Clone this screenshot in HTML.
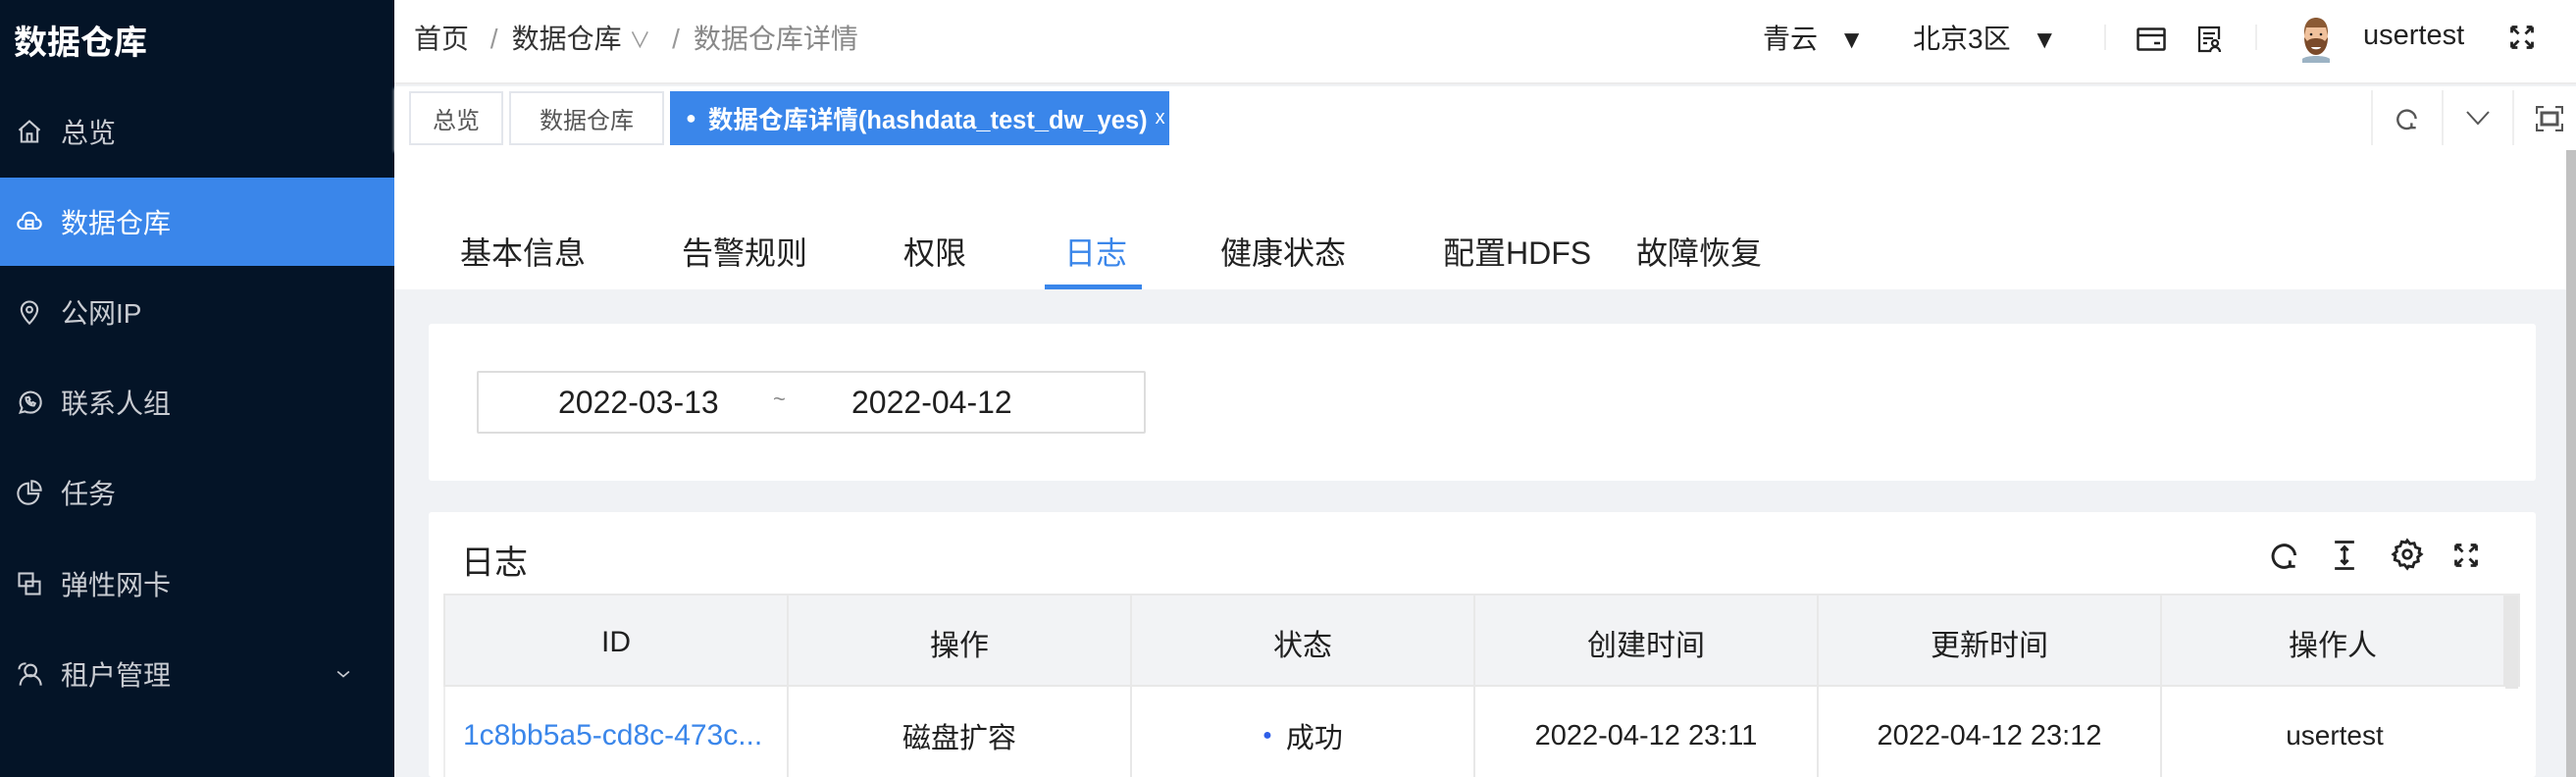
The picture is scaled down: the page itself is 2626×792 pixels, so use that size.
<!DOCTYPE html>
<html><head><meta charset="utf-8"><style>
*{margin:0;padding:0;box-sizing:border-box}
html,body{overflow:hidden}
body{width:2626px;height:792px;overflow:hidden;background:#f0f2f5;font-family:"Liberation Sans","Noto Sans CJK SC",sans-serif;color:#1f1f1f;position:relative}
.abs{position:absolute}
#side{left:0;top:0;width:402px;height:792px;background:#041427}
.logo{left:14px;top:16px;color:#fff;font-size:34px;font-weight:bold}
.mi{left:0;width:402px;height:90px;color:#c9ccd2;font-size:28px;display:flex;align-items:center}
.mi svg{position:absolute;left:16px}
.mi span{position:absolute;left:62px}
.mi.act{background:#3a86ea;color:#fff}
#hdr{left:402px;top:0;width:2224px;height:86px;background:#fff;border-bottom:2px solid #ebebeb}
.bc{top:18px;font-size:28px;color:#333}
#tags{left:402px;top:88px;width:2224px;height:65px;background:#fff;box-shadow:0 2px 3px #eee}
.tag{top:5px;height:55px;border:2px solid #e3e6ec;font-size:24px;color:#555;display:flex;align-items:center;justify-content:center;background:#fff}
#tabs{left:402px;top:153px;width:2214px;height:142px;background:#fff}
.tab{top:80px;font-size:32px;color:#222}
.card{background:#fff;border-radius:3px}
.tc{position:absolute;top:0;height:95px;display:flex;align-items:center;justify-content:center;font-size:29px;border-right:2px solid #e8e8e8}
.hd .tc{font-size:30px}
</style></head><body>
<div id="side" class="abs">
<div class="abs logo">数据仓库</div>
<div class="abs mi" style="top:89px"><svg width="28" height="28" viewBox="0 0 24 24" fill="none" stroke="#c9ccd2" stroke-width="1.8"><path d="M3 11L12 3l9 8M5 9v12h14V9M10 21v-7h4v7"/></svg><span>总览</span></div>
<div class="abs mi act" style="top:181px"><svg width="28" height="28" viewBox="0 0 24 24" fill="none" stroke="#fff" stroke-width="1.8"><path d="M6 18a4 4 0 010-8 6 6 0 0112 0 4 4 0 010 8z"/><rect x="9" y="11" width="6" height="7"/><path d="M9 14.5h6"/></svg><span>数据仓库</span></div>
<div class="abs mi" style="top:273px"><svg width="28" height="28" viewBox="0 0 24 24" fill="none" stroke="#c9ccd2" stroke-width="1.8"><path d="M12 22s-7-7-7-12a7 7 0 0114 0c0 5-7 12-7 12z"/><circle cx="12" cy="10" r="2.5"/></svg><span>公网IP</span></div>
<div class="abs mi" style="top:365px"><svg width="28" height="28" viewBox="0 0 24 24" fill="none" stroke="#c9ccd2" stroke-width="1.8"><path d="M4 21l1.5-4A9 9 0 1112 21a9 9 0 01-4-1z"/><path d="M9 8c0 4 3 7 7 7l1-2-2-1-1 1c-1-.5-2-1.5-2.5-2.5l1-1-1-2z"/></svg><span>联系人组</span></div>
<div class="abs mi" style="top:457px"><svg width="28" height="28" viewBox="0 0 24 24" fill="none" stroke="#c9ccd2" stroke-width="1.8"><path d="M11 4a9 9 0 109 9h-9z"/><path d="M14 2v8h8a8 8 0 00-8-8z"/></svg><span>任务</span></div>
<div class="abs mi" style="top:550px"><svg width="28" height="28" viewBox="0 0 24 24" fill="none" stroke="#c9ccd2" stroke-width="1.8"><rect x="3" y="3" width="12" height="11"/><rect x="9" y="10" width="12" height="11"/></svg><span>弹性网卡</span></div>
<div class="abs mi" style="top:642px"><svg width="28" height="28" viewBox="0 0 24 24" fill="none" stroke="#c9ccd2" stroke-width="1.8"><circle cx="13" cy="9" r="5"/><path d="M4 22a9 9 0 0118 0M9 3a5 5 0 00-6 5"/></svg><span>租户管理</span><svg style="left:340px" width="20" height="20" viewBox="0 0 24 24" fill="none" stroke="#c9ccd2" stroke-width="2"><path d="M5 9l7 6 7-6"/></svg></div>
</div>
<div id="hdr" class="abs">
<div class="abs bc" style="left:20px">首页 <span style="color:#999;margin:0 14px">/</span>数据仓库 <span style="color:#999;font-size:22px">∨</span> <span style="color:#999;margin:0 14px">/</span><span style="color:#888">数据仓库详情</span></div>
<div class="abs bc" style="left:1395px;color:#222">青云 <span style="font-size:26px;margin-left:14px">▼</span></div>
<div class="abs bc" style="left:1548px;color:#222">北京3区 <span style="font-size:26px;margin-left:14px">▼</span></div>
<div class="abs" style="left:1743px;top:25px;width:2px;height:26px;background:#eee"></div>
<svg class="abs" style="left:1776px;top:28px" width="30" height="24" viewBox="0 0 30 24" fill="none" stroke="#222" stroke-width="2.5"><rect x="1.5" y="1.5" width="27" height="21" rx="1"/><path d="M1.5 8h27M18 16h6"/></svg>
<svg class="abs" style="left:1838px;top:26px" width="26" height="28" viewBox="0 0 26 28" fill="none" stroke="#222" stroke-width="2.3"><path d="M14 26H2V2h20v12M6 8h12M6 13h10M6 18h4"/><circle cx="18" cy="18" r="3"/><path d="M13 27a5 5 0 0110 0"/></svg>
<div class="abs" style="left:1897px;top:25px;width:2px;height:26px;background:#eee"></div>
<svg class="abs" style="left:1941px;top:16px" width="36" height="48" viewBox="0 0 36 48"><path d="M4 44c4-4 24-4 28 0v4H4z" fill="#9cb3c4"/><ellipse cx="18" cy="20" rx="12" ry="15" fill="#f0c19c"/><path d="M6 20C5 6 12 2 18 2s13 4 12 18l-2-8H8z" fill="#8b5a34"/><path d="M6 22c0 12 6 18 12 18s12-6 12-18l-3 4c-3-4-15-4-18 0z" fill="#7a4a2a"/><path d="M13 32h10c-1 3-9 3-10 0z" fill="#fff"/><circle cx="13" cy="19" r="1.3" fill="#222"/><circle cx="23" cy="19" r="1.3" fill="#222"/></svg>
<div class="abs bc" style="left:2007px;top:20px;font-size:29px;color:#222">usertest</div>
<svg class="abs" style="left:2155px;top:24px" width="28" height="28" viewBox="0 0 24 24" fill="none" stroke="#222" stroke-width="2.4"><path d="M3 3l6 6M3 3v5M3 3h5M21 3l-6 6M21 3v5M21 3h-5M3 21l6-6M3 21v-5M3 21h5M21 21l-6-6M21 21v-5M21 21h-5"/></svg>
</div>
<div id="tags" class="abs">
<div class="abs tag" style="left:15px;width:96px">总览</div>
<div class="abs tag" style="left:117px;width:158px">数据仓库</div>
<div class="abs tag" style="left:281px;width:509px;background:#3a86ea;border-color:#3a86ea;color:#fff;font-weight:bold;font-size:25.5px;justify-content:flex-start;padding-left:14px;white-space:nowrap"><span style="font-size:18px;margin-right:12px">●</span>数据仓库详情(hashdata_test_dw_yes)<span style="font-weight:normal;margin-left:8px;font-size:20px">x</span></div>
<div class="abs" style="left:2015px;top:4px;width:2px;height:56px;background:#eee"></div>
<div class="abs" style="left:2087px;top:4px;width:2px;height:56px;background:#eee"></div>
<div class="abs" style="left:2159px;top:4px;width:2px;height:56px;background:#eee"></div>
<svg class="abs" style="left:2039px;top:20px" width="26" height="26" viewBox="0 0 24 24" fill="none" stroke="#555" stroke-width="2.2"><path d="M16 20A8.5 8.5 0 1120 12"/><path d="M16 16v4.5h4"/></svg>
<svg class="abs" style="left:2111px;top:22px" width="26" height="20" viewBox="0 0 26 20" fill="none" stroke="#555" stroke-width="2"><path d="M2 4l11 12L24 4"/></svg>
<svg class="abs" style="left:2183px;top:20px" width="28" height="26" viewBox="0 0 28 26" fill="none" stroke="#555" stroke-width="2.2"><path d="M1 8V1h7M20 1h7v7M27 18v7h-7M8 25H1v-7"/><rect x="6" y="7" width="16" height="12" stroke-width="3"/></svg>
</div>
<div class="abs" style="left:2616px;top:153px;width:10px;height:639px;background:#c1c1c1"></div>
<div id="tabs" class="abs">
<div class="abs tab" style="left:67px">基本信息</div>
<div class="abs tab" style="left:293px">告警规则</div>
<div class="abs tab" style="left:519px">权限</div>
<div class="abs tab" style="left:683px;color:#3a86ea">日志</div>
<div class="abs" style="left:663px;top:137px;width:99px;height:5px;background:#3a86ea"></div>
<div class="abs tab" style="left:842px">健康状态</div>
<div class="abs tab" style="left:1069px">配置HDFS</div>
<div class="abs tab" style="left:1266px">故障恢复</div>
</div>
<div class="abs card" style="left:437px;top:330px;width:2148px;height:160px">
<div class="abs" style="left:49px;top:48px;width:682px;height:64px;border:2px solid #ddd;border-radius:2px;font-size:32px">
<span class="abs" style="left:81px;top:12px">2022-03-13</span>
<span class="abs" style="left:300px;top:14px;color:#888;font-size:22px">~</span>
<span class="abs" style="left:380px;top:12px">2022-04-12</span>
</div></div>
<div class="abs card" style="left:437px;top:522px;width:2148px;height:270px;overflow:hidden">
<div class="abs" style="left:33px;top:24px;font-size:34px;color:#222">日志</div>
<svg class="abs" style="left:1876px;top:28px" width="32" height="32" viewBox="0 0 24 24" fill="none" stroke="#222" stroke-width="2.2"><path d="M16 20A8.5 8.5 0 1120 12"/><path d="M16 16v4.5h4"/></svg>
<svg class="abs" style="left:1938px;top:28px" width="30" height="32" viewBox="0 0 24 26" fill="none" stroke="#222" stroke-width="2.2"><path d="M4 2h16M4 24h16M12 6v14M9 9l3-3 3 3M9 17l3 3 3-3"/></svg>
<svg class="abs" style="left:2000px;top:26px" width="34" height="34" viewBox="0 0 24 24" fill="none" stroke="#222" stroke-width="2"><circle cx="12" cy="12" r="3"/><path d="M12 2l2 2.5 3-.5 1 3 3 1-.5 3L22 12l-2.5 2 .5 3-3 1-1 3-3-.5L12 22l-2-2.5-3 .5-1-3-3-1 .5-3L2 12l2.5-2-.5-3 3-1 1-3 3 .5z"/></svg>
<svg class="abs" style="left:2063px;top:30px" width="28" height="28" viewBox="0 0 24 24" fill="none" stroke="#222" stroke-width="2.4"><path d="M3 3l6 6M3 3v5M3 3h5M21 3l-6 6M21 3v5M21 3h-5M3 21l6-6M3 21v-5M3 21h5M21 21l-6-6M21 21v-5M21 21h-5"/></svg>
<div class="abs hd" style="left:15px;top:83px;width:2117px;height:95px;background:#f2f3f5;border:2px solid #e8e8e8">
<div class="tc" style="left:0;width:350px">ID</div><div class="tc" style="left:350px;width:350px">操作</div><div class="tc" style="left:700px;width:350px">状态</div><div class="tc" style="left:1050px;width:350px">创建时间</div><div class="tc" style="left:1400px;width:350px">更新时间</div><div class="tc" style="left:1750px;width:350px">操作人</div>
<div class="abs" style="right:0;top:0;width:15px;height:95px;background:#e6e6e6"></div>
</div>
<div class="abs" style="left:15px;top:178px;width:2102px;height:100px;background:#fff;border-left:2px solid #eee">
<div class="tc" style="left:0;width:350px;justify-content:flex-start;padding-left:18px;color:#3a86ea;height:100px;font-size:30px">1c8bb5a5-cd8c-473c...</div><div class="tc" style="left:350px;width:350px;height:100px">磁盘扩容</div><div class="tc" style="left:700px;width:350px;height:100px"><span style="color:#2f5fe8;font-size:16px;margin-right:14px">●</span>成功</div><div class="tc" style="left:1050px;width:350px;height:100px">2022-04-12 23:11</div><div class="tc" style="left:1400px;width:350px;height:100px">2022-04-12 23:12</div><div class="tc" style="left:1750px;width:352px;height:100px;border-right:none;font-size:28px">usertest</div>
</div>
</div>
</body></html>
